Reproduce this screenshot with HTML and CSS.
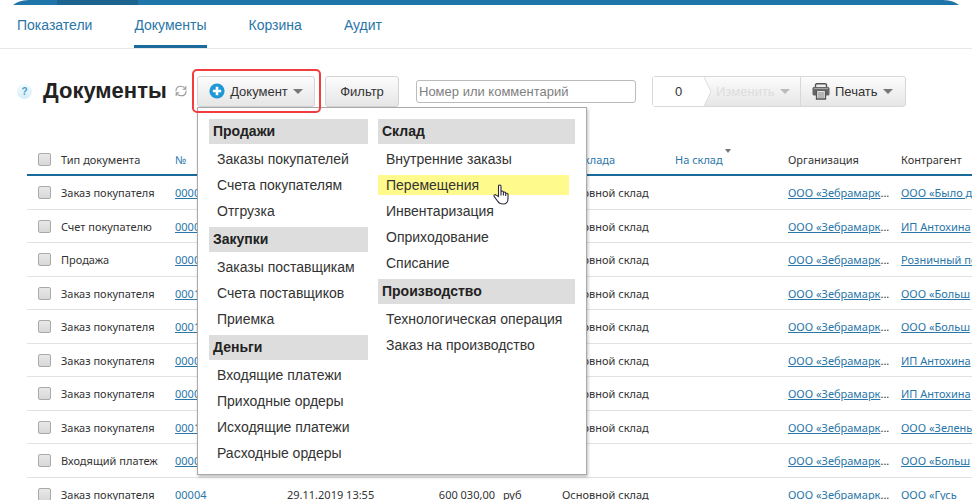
FILE: index.html
```html
<!DOCTYPE html>
<html lang="ru">
<head>
<meta charset="utf-8">
<title>Документы</title>
<link rel="stylesheet" href="styles.css">
</head>
<body>
<div class="topbar">
  <svg class="topbar-end" width="16" height="5" viewBox="0 0 16 5" aria-hidden="true"><path d="M0 5C4 2 8 .6 16 0V5z" fill="#1f74aa"/></svg>
  <div class="topbar-fill"><div class="topbar-active"></div></div>
  <svg class="topbar-end" width="16" height="5" viewBox="0 0 16 5" aria-hidden="true"><path d="M16 5C12 2 8 .6 0 0V5z" fill="#1f74aa"/></svg>
</div>
<nav class="tabs">
  <a class="tab" href="#">Показатели</a>
  <a class="tab tab-current" href="#" aria-current="page">Документы</a>
  <a class="tab" href="#">Корзина</a>
  <a class="tab" href="#">Аудит</a>
</nav>
<header class="toolbar">
  <button class="help" type="button" aria-label="Справка">?</button>
  <h1 class="title">Документы</h1>
  <button class="refresh" type="button" aria-label="Обновить">
    <svg width="12" height="12" viewBox="0 0 12 12" fill="none" stroke="#999" stroke-width="1.1"><path d="M1 6.300V5.400C1.200 2.800 3.300 1.200 5.800 1.200c1.900 0 3.400.8 4.300 2.300M11 5.700v.9c-.2 2.600-2.300 4.200-4.800 4.200-1.900 0-3.400-.8-4.300-2.300M10.800.9v3.300H7.600M1.200 11.100V7.800h3.200"/></svg>
  </button>
  <div class="dropdown">
    <button class="button button-add" type="button" aria-expanded="true">
      <svg width="16" height="16" viewBox="0 0 16 16" aria-hidden="true"><circle cx="8" cy="8" r="7.6" fill="#1e98d7"/><path d="M8 3.800v8.400M3.800 8h8.400" stroke="#fff" stroke-width="2.6"/></svg>
      <span>Документ</span>
      <i class="caret"></i>
    </button>
    <div class="menu">
      <div class="menu-column">
        <h2 class="menu-heading">Продажи</h2>
        <ul class="menu-list">
          <li><a href="#">Заказы покупателей</a></li>
          <li><a href="#">Счета покупателям</a></li>
          <li><a href="#">Отгрузка</a></li>
        </ul>
        <h2 class="menu-heading">Закупки</h2>
        <ul class="menu-list">
          <li><a href="#">Заказы поставщикам</a></li>
          <li><a href="#">Счета поставщиков</a></li>
          <li><a href="#">Приемка</a></li>
        </ul>
        <h2 class="menu-heading">Деньги</h2>
        <ul class="menu-list">
          <li><a href="#">Входящие платежи</a></li>
          <li><a href="#">Приходные ордеры</a></li>
          <li><a href="#">Исходящие платежи</a></li>
          <li><a href="#">Расходные ордеры</a></li>
        </ul>
      </div>
      <div class="menu-column">
        <h2 class="menu-heading">Склад</h2>
        <ul class="menu-list">
          <li><a href="#">Внутренние заказы</a></li>
          <li><a class="hovered" href="#">Перемещения
            <svg class="cursor" width="17" height="21" viewBox="0 0 17 21" aria-hidden="true"><path d="M5.500 12.500V2.200C5.500.5 8 .5 8 2.200V8c0-1.400 2.400-1.400 2.400.2V9c0-1.400 2.300-1.300 2.300.2V10c0-1.200 2.300-1.100 2.300.4v4c0 3.600-2 5.600-5 5.600-3 0-4.300-1-5.500-3L1.300 12.600c-1-1.600.8-2.600 1.900-1.500z" fill="#fff" stroke="#2b2b3a" stroke-width="1.1"/><path d="M8 8v3.500M10.400 9v2.500M12.700 10v2" stroke="#2b2b3a" stroke-width="1.1"/></svg></a></li>
          <li><a href="#">Инвентаризация</a></li>
          <li><a href="#">Оприходование</a></li>
          <li><a href="#">Списание</a></li>
        </ul>
        <h2 class="menu-heading">Производство</h2>
        <ul class="menu-list">
          <li><a href="#">Технологическая операция</a></li>
          <li><a href="#">Заказ на производство</a></li>
        </ul>
      </div>
    </div>
    <div class="highlight"></div>
  </div>
  <button class="button button-filter" type="button">Фильтр</button>
  <input class="search" type="text" placeholder="Номер или комментарий" aria-label="Номер или комментарий">
  <div class="group">
    <span class="count">0</span>
    <svg class="notch" width="8" height="29" viewBox="0 0 8 29" aria-hidden="true"><path d="M0 0L7 14.500L0 29z" fill="#fff"/><path d="M0 0L7 14.500L0 29" fill="none" stroke="#ddd"/></svg>
    <button class="group-button group-edit" type="button" disabled>Изменить <i class="caret"></i></button>
    <button class="group-button group-print" type="button">
      <svg width="18" height="17" viewBox="0 0 18 17" aria-hidden="true"><path d="M3.500 4V1.500L4.500.7h9l1 .8V4" fill="#eee" stroke="#555" stroke-width="1.4"/><path d="M1.500 4h15l1 1v6.500l-1 1H14V8H4v4.500H1.500l-1-1V5z" fill="#666"/><path d="M2 5.600h14" stroke="#aaa"/><path d="M4.500 8v8h9V8" fill="#e4e4e4" stroke="#555" stroke-width="1.3"/><path d="M6 10h6M6 12h6M6 14h6" stroke="#888"/></svg>
      <span>Печать</span>
      <i class="caret"></i>
    </button>
  </div>
</header>
<main class="content">
<table class="documents">
  <colgroup><col class="c-check"><col class="c-type"><col class="c-number"><col class="c-date"><col class="c-sum"><col class="c-currency"><col class="c-store"><col class="c-store"><col class="c-store"><col class="c-partner"></colgroup>
  <thead>
    <tr><th><input type="checkbox" aria-label="Выбрать все"></th><th>Тип документа</th><th><a href="#">№</a></th><th></th><th></th><th></th><th><a href="#">Со склада</a></th><th><a class="sorted" href="#">На склад</a></th><th>Организация</th><th>Контрагент</th></tr>
  </thead>
  <tbody>
    <tr><td><input type="checkbox" aria-label="Выбрать"></td><td>Заказ покупателя</td><td><a href="#">00004</a></td><td></td><td></td><td></td><td>Основной склад</td><td></td><td><a href="#">ООО «Зебрамарк</a>...</td><td><a href="#">ООО «Было д</a></td></tr>
    <tr><td><input type="checkbox" aria-label="Выбрать"></td><td>Счет покупателю</td><td><a href="#">00004</a></td><td></td><td></td><td></td><td>Основной склад</td><td></td><td><a href="#">ООО «Зебрамарк</a>...</td><td><a href="#">ИП Антохина</a></td></tr>
    <tr><td><input type="checkbox" aria-label="Выбрать"></td><td>Продажа</td><td><a href="#">00004</a></td><td></td><td></td><td></td><td>Основной склад</td><td></td><td><a href="#">ООО «Зебрамарк</a>...</td><td><a href="#">Розничный по</a></td></tr>
    <tr><td><input type="checkbox" aria-label="Выбрать"></td><td>Заказ покупателя</td><td><a href="#">00010</a></td><td></td><td></td><td></td><td>Основной склад</td><td></td><td><a href="#">ООО «Зебрамарк</a>...</td><td><a href="#">ООО «Больш</a></td></tr>
    <tr><td><input type="checkbox" aria-label="Выбрать"></td><td>Заказ покупателя</td><td><a href="#">00010</a></td><td></td><td></td><td></td><td>Основной склад</td><td></td><td><a href="#">ООО «Зебрамарк</a>...</td><td><a href="#">ООО «Больш</a></td></tr>
    <tr><td><input type="checkbox" aria-label="Выбрать"></td><td>Заказ покупателя</td><td><a href="#">00004</a></td><td></td><td></td><td></td><td>Основной склад</td><td></td><td><a href="#">ООО «Зебрамарк</a>...</td><td><a href="#">ИП Антохина</a></td></tr>
    <tr><td><input type="checkbox" aria-label="Выбрать"></td><td>Заказ покупателя</td><td><a href="#">00004</a></td><td></td><td></td><td></td><td>Основной склад</td><td></td><td><a href="#">ООО «Зебрамарк</a>...</td><td><a href="#">ИП Антохина</a></td></tr>
    <tr><td><input type="checkbox" aria-label="Выбрать"></td><td>Заказ покупателя</td><td><a href="#">00010</a></td><td></td><td></td><td></td><td>Основной склад</td><td></td><td><a href="#">ООО «Зебрамарк</a>...</td><td><a href="#">ООО «Зелень</a></td></tr>
    <tr><td><input type="checkbox" aria-label="Выбрать"></td><td>Входящий платеж</td><td><a href="#">00004</a></td><td></td><td></td><td></td><td></td><td></td><td><a href="#">ООО «Зебрамарк</a>...</td><td><a href="#">ООО «Больш</a></td></tr>
    <tr><td><input type="checkbox" aria-label="Выбрать"></td><td>Заказ покупателя</td><td><a href="#">00004</a></td><td>29.11.2019 13:55</td><td class="sum">600 030,00</td><td class="currency">руб</td><td>Основной склад</td><td></td><td><a href="#">ООО «Зебрамарк</a>...</td><td><a href="#">ООО «Гусь</a></td></tr>
  </tbody>
</table>
</main>
</body>
</html>
```
FILE: styles.css
```css
* { box-sizing: border-box; }
html, body { margin: 0; height: 100%; overflow: hidden; }
body { background: #fff; color: #333; font-family: "Liberation Sans", Arial, sans-serif; font-size: 14px; }
a { color: #2a76a8; text-decoration: none; }
button { font: inherit; color: inherit; cursor: pointer; }

.topbar { display: flex; height: 5px; padding: 0 13px; }
.topbar-end { flex: none; }
.topbar-fill { flex: 1; background: #1f74aa; padding-left: 28px; }
.topbar-active { width: 81px; height: 5px; background: #1c638f; }

.tabs { display: flex; gap: 42px; height: 44px; padding: 0 17px; border-bottom: 1px solid #e8e8e8; }
.tab { height: 43px; line-height: 40px; }
.tab-current { border-bottom: 3px solid #1b6a9c; }

.toolbar { display: flex; align-items: center; height: 30px; margin-top: 27px; padding-left: 17px; font-size: 13px; }
.help { width: 15px; height: 15px; padding: 0; border: 0; border-radius: 50%; background: linear-gradient(#f4fafd, #d4edf8); color: #4a9cc8; font-size: 10px; font-weight: bold; line-height: 15px; }
.title { width: 131px; margin: 0 0 0 11px; color: #222; font-size: 22px; line-height: 28px; }
.refresh { display: flex; width: 14px; margin-right: 9px; padding: 1px; border: 0; background: none; }
.button { display: flex; align-items: center; justify-content: center; height: 31px; border: 1px solid #d4d4d4; border-radius: 3px; background: linear-gradient(#fcfcfc, #e6e6e6); padding: 0 10px; }
.button svg { flex: none; }
.caret { flex: none; border: 5px solid transparent; border-top-color: #777; border-bottom: 0; }
.dropdown { position: relative; }
.button-add { gap: 5px; width: 118px; }
.button-filter { width: 74px; margin: 0 17px 0 10px; }
.search { width: 220px; height: 23px; padding: 0 2px; border: 1px solid #bbb; border-radius: 3px; font: inherit; }
.search::placeholder { color: #808080; }

.highlight { position: absolute; z-index: 3; top: -7px; left: -5px; right: -6px; height: 44px; border: 2px solid #f23d3f; border-radius: 5px; pointer-events: none; }
.menu { position: absolute; z-index: 2; top: 31px; left: 0; display: flex; gap: 10px; width: 390px; padding: 11px 11px 5px; border: 1px solid #aaa; background: #fff; box-shadow: 1px 2px 3px rgba(0, 0, 0, .25); font-size: 14px; }
.menu-column:first-child { width: 159px; }
.menu-column:last-child { width: 197px; }
.menu-heading { margin: 0; padding: 0 4px; background: #ddd; color: #222; font-size: 14px; line-height: 25px; }
.menu-list { margin: 0; padding: 2px 0 3px; list-style: none; }
.menu-list li { height: 26px; padding: 3px 6px 3px 0; }
.menu-list a { position: relative; display: block; padding-left: 8px; color: #333; line-height: 20px; white-space: nowrap; }
.menu-list .hovered { background: #fffa8c; }
.cursor { position: absolute; left: 115px; top: 9px; z-index: 1; }

.group { display: flex; width: 254px; height: 31px; margin-left: 16px; border: 1px solid #d8d8d8; border-radius: 3px; background: linear-gradient(#fcfcfc, #e6e6e6); }
.count { width: 51px; background: #fff; text-align: center; line-height: 29px; }
.notch { flex: none; }
.group-button { display: flex; align-items: center; border: 0; background: none; padding: 0; white-space: nowrap; }
.group-edit { flex: 1; gap: 5px; padding-left: 4px; color: #ddd; }
.group-edit .caret { border-top-color: #bbb; }
.group-print { gap: 5px; width: 105px; padding-left: 11px; border-left: 1px solid #d8d8d8; }

.content { margin: 38px 0 0 27px; }
.documents { width: 100%; table-layout: fixed; border-collapse: separate; border-spacing: 0; font-family: "Noto Sans", Tahoma, sans-serif; font-size: 11px; }
.documents th { height: 32px; padding: 0; border-bottom: 2px solid #1b6a9c; font-weight: normal; text-align: left; }
.documents td { height: 33px; padding: 0; border-bottom: 1px solid #e2e2e2; white-space: nowrap; overflow: hidden; }
.documents tr:nth-child(odd) td { height: 34px; }
.documents td a { text-decoration: underline; }
.documents .sum { text-align: right; }
.documents .currency { padding-left: 8px; }
.documents input { display: block; appearance: none; width: 13px; height: 13px; margin: 0 0 0 11px; border: 1px solid #aaa; border-radius: 2px; background: linear-gradient(#e8e8e8, #d8d8d8); }
.sorted { position: relative; }
.sorted::after { content: ""; position: absolute; right: -8px; top: -3px; border: 3px solid transparent; border-top: 4px solid #777; border-bottom: 0; }
.c-check { width: 34px; }
.c-type { width: 114px; }
.c-number { width: 112px; }
.c-date { width: 120px; }
.c-sum { width: 88px; }
.c-currency { width: 67px; }
.c-store { width: 113px; }
```
